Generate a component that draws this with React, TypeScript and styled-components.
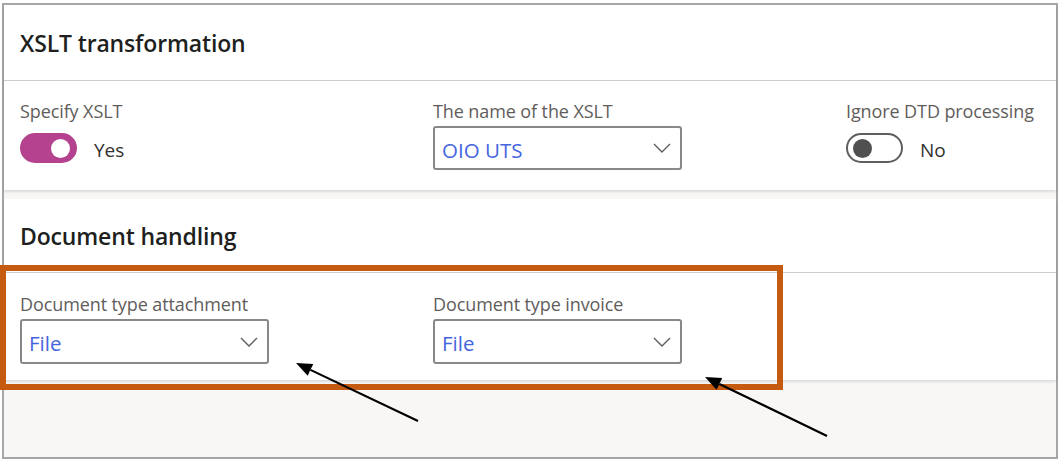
import React from "react";
import styled, { createGlobalStyle } from "styled-components";

const Global = createGlobalStyle`
  html, body { margin: 0; padding: 0; background: #ffffff; }
  body { font-family: "Open Sans", "Noto Sans", sans-serif; }
  * { box-sizing: border-box; }
`;

const Page = styled.div`
  position: relative;
  width: 1060px;
  height: 464px;
  padding: 3px 0 0 2px;
`;

const Frame = styled.div`
  width: 1056px;
  height: 456px;
  border: 2px solid #a6a6a6;
  background: #f8f7f6;
  display: flex;
  flex-direction: column;
  gap: 9px;
`;

const Section = styled.section`
  background: #ffffff;
  box-shadow: 0 1.5px 3px rgba(0, 0, 0, 0.14);
`;

const SectionHeader = styled.div<{ $h: number }>`
  height: ${(p) => p.$h}px;
  border-bottom: 1px solid #cfcdcb;
  display: flex;
  align-items: center;
  padding-left: 16px;
  font-size: 23px;
  font-weight: 600;
  color: #201f1e;
  letter-spacing: -0.15px;
`;

const FieldRow = styled.div<{ $pt: number; $pb: number }>`
  display: grid;
  grid-template-columns: 413px 413px 1fr;
  padding: ${(p) => p.$pt}px 16px ${(p) => p.$pb}px;
`;

const Field = styled.div`
  display: flex;
  flex-direction: column;
  gap: 4px;
`;

const Label = styled.div`
  font-size: 18px;
  line-height: 22px;
  color: #5f5d5b;
  white-space: nowrap;
  letter-spacing: -0.1px;
`;

const ControlLine = styled.div<{ $h: number }>`
  height: ${(p) => p.$h}px;
  display: flex;
  align-items: center;
  gap: 17px;
`;

const Track = styled.div<{ $on: boolean }>`
  width: 57px;
  height: 30px;
  border-radius: 15px;
  display: flex;
  align-items: center;
  justify-content: ${(p) => (p.$on ? "flex-end" : "flex-start")};
  padding: 0 5px;
  background: ${(p) => (p.$on ? "#b4428e" : "#ffffff")};
  border: 2px solid ${(p) => (p.$on ? "#b4428e" : "#605e5c")};
`;

const Knob = styled.div<{ $on: boolean }>`
  width: 19px;
  height: 19px;
  border-radius: 50%;
  background: ${(p) => (p.$on ? "#ffffff" : "#505050")};
`;

const ToggleText = styled.span`
  font-size: 19px;
  color: #323130;
  padding-top: 4px;
`;

const Select = styled.div`
  width: 249px;
  height: 100%;
  border: 2px solid #8a8886;
  border-radius: 3px;
  display: flex;
  align-items: center;
  justify-content: space-between;
  padding: 3px 9px 0 7px;
  font-size: 20.5px;
  color: #4565e0;
  background: #ffffff;
`;

const Chevron = () => (
  <svg width="18" height="10" viewBox="0 0 18 10" fill="none" style={{ marginTop: -3 }}>
    <path d="M1 1 L9 9 L17 1" stroke="#605e5c" strokeWidth="1.4" />
  </svg>
);

const Highlight = styled.div`
  position: absolute;
  left: 0;
  top: 265px;
  width: 783px;
  height: 125px;
  border: 6px solid #c55a11;
  pointer-events: none;
`;

const Overlay = styled.svg`
  position: absolute;
  left: 0;
  top: 0;
  pointer-events: none;
`;

function Arrow({ tail, tip }: { tail: [number, number]; tip: [number, number] }) {
  const dx = tip[0] - tail[0];
  const dy = tip[1] - tail[1];
  const len = Math.hypot(dx, dy);
  const ux = dx / len;
  const uy = dy / len;
  const hl = 16;
  const hw = 6.5;
  const bx = tip[0] - ux * hl;
  const by = tip[1] - uy * hl;
  const px = -uy * hw;
  const py = ux * hw;
  return (
    <g>
      <line x1={tail[0]} y1={tail[1]} x2={bx} y2={by} stroke="#000" strokeWidth="2.2" />
      <polygon
        points={`${tip[0]},${tip[1]} ${bx + px},${by + py} ${bx - px},${by - py}`}
        fill="#000"
      />
    </g>
  );
}

function Toggle({ on, text }: { on: boolean; text: string }) {
  return (
    <ControlLine $h={44}>
      <Track $on={on}>
        <Knob $on={on} />
      </Track>
      <ToggleText>{text}</ToggleText>
    </ControlLine>
  );
}

function Dropdown({ value, h = 44 }: { value: string; h?: number }) {
  return (
    <ControlLine $h={h}>
      <Select>
        <span>{value}</span>
        <Chevron />
      </Select>
    </ControlLine>
  );
}

export default function App() {
  return (
    <Page>
      <Global />
      <Frame>
        <Section>
          <SectionHeader $h={76}>XSLT transformation</SectionHeader>
          <FieldRow $pt={19} $pb={20}>
            <Field>
              <Label>Specify XSLT</Label>
              <Toggle on text="Yes" />
            </Field>
            <Field>
              <Label>The name of the XSLT</Label>
              <Dropdown value="OIO UTS" />
            </Field>
            <Field>
              <Label>Ignore DTD processing</Label>
              <Toggle on={false} text="No" />
            </Field>
          </FieldRow>
        </Section>
        <Section>
          <SectionHeader $h={74}>Document handling</SectionHeader>
          <FieldRow $pt={20} $pb={16}>
            <Field>
              <Label>Document type attachment</Label>
              <Dropdown value="File" h={45} />
            </Field>
            <Field>
              <Label>Document type invoice</Label>
              <Dropdown value="File" h={45} />
            </Field>
          </FieldRow>
        </Section>
      </Frame>
      <Highlight />
      <Overlay width="1060" height="464" viewBox="0 0 1060 464">
        <Arrow tail={[418, 421]} tip={[296, 363]} />
        <Arrow tail={[827, 436]} tip={[705, 377]} />
      </Overlay>
    </Page>
  );
}
